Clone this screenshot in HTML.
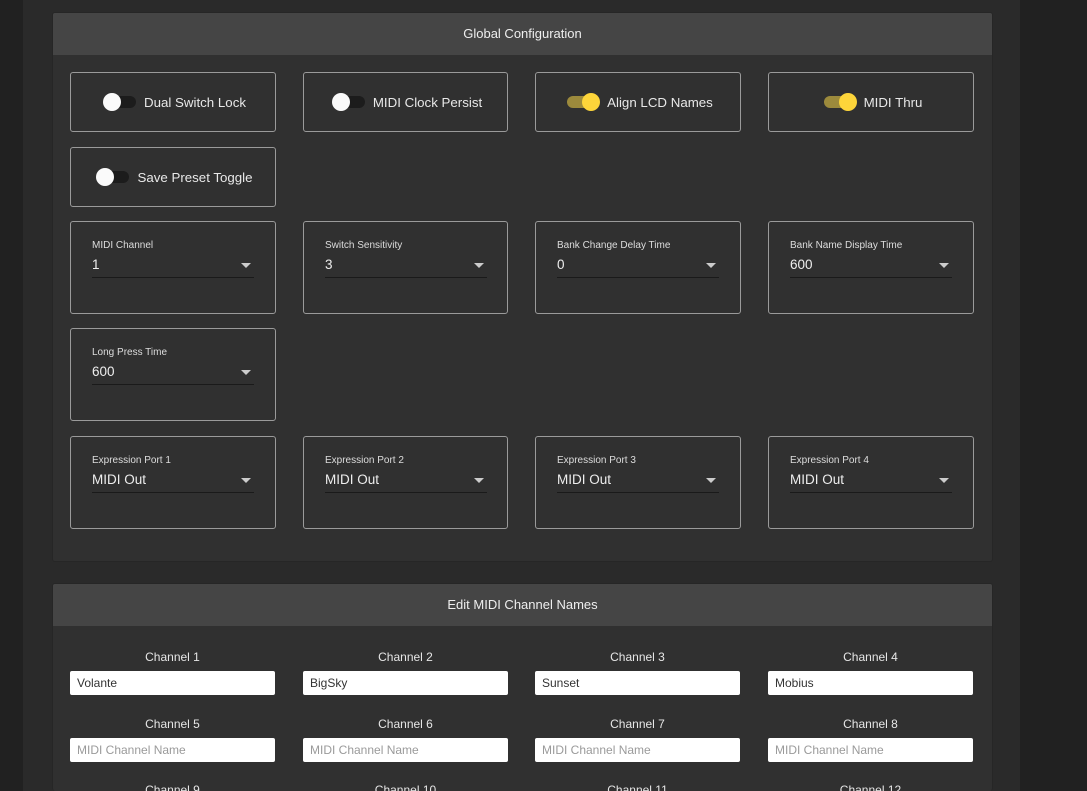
<!DOCTYPE html>
<html style="width:1087px;height:791px;overflow:hidden"><head><style>
*{box-sizing:border-box;margin:0;padding:0}
body{width:1087px;height:791px;overflow:hidden;background:#212121;font-family:"Liberation Sans",Roboto,sans-serif;position:relative}
.main{position:absolute;left:23px;top:0;width:997px;height:791px;background:#2a2a2a}
.panel{position:absolute;left:52px;width:941px;background:#303030;border:1px solid #262626;border-radius:3px;overflow:hidden}
.hdr{height:42px;background:#454545;color:#eee;font-size:13px;text-align:center;line-height:42px}
.card{position:absolute;border:1px solid #9a9a9a;border-radius:3px;color:#e8e8e8}
.tg{display:flex;align-items:center;justify-content:center;font-size:13.3px;padding-left:4px}
.sw{position:relative;width:32px;height:12px;border-radius:6px;background:#1c1c1c;margin-right:8px}
.sw i{position:absolute;top:-3px;left:-1px;width:18px;height:18px;border-radius:50%;background:#fafafa}
.sw.on{background:#9c8a3c}.sw.on i{left:15px;background:#fdd53a}
.lbl{position:absolute;left:21px;top:18px;font-size:10px;color:#ddd}
.val{position:absolute;left:21px;top:35px;font-size:13.5px;color:#eee}
.ul{position:absolute;left:21px;top:55px;width:162px;height:1px;background:#1a1a1a}
.ar{position:absolute;left:170px;top:41px;border-left:5px solid transparent;border-right:5px solid transparent;border-top:5px solid #ccc}
.cl{position:absolute;width:205px;text-align:center;font-size:12px;color:#e6e6e6}
.in{position:absolute;width:205px;height:24px;background:#fff;border-radius:2px;font-size:12px;line-height:24px;padding-left:7px;color:#333}
.in.ph{color:#9a9a9a}
</style></head><body>
<div class="main"></div>
<div class="panel" style="top:12px;height:550px"><div class="hdr">Global Configuration</div></div>
<div class="card tg" style="left:70px;top:72px;width:206px;height:60px"><span class="sw"><i></i></span>Dual Switch Lock</div>
<div class="card tg" style="left:303px;top:72px;width:205px;height:60px"><span class="sw"><i></i></span>MIDI Clock Persist</div>
<div class="card tg" style="left:535px;top:72px;width:206px;height:60px"><span class="sw on"><i></i></span>Align LCD Names</div>
<div class="card tg" style="left:768px;top:72px;width:206px;height:60px"><span class="sw on"><i></i></span>MIDI Thru</div>
<div class="card tg" style="left:70px;top:147px;width:206px;height:60px"><span class="sw"><i></i></span>Save Preset Toggle</div>

<div class="card" style="left:70px;top:221px;width:206px;height:93px"><div class="lbl">MIDI Channel</div><div class="val">1</div><div class="ar"></div><div class="ul"></div></div>
<div class="card" style="left:303px;top:221px;width:205px;height:93px"><div class="lbl">Switch Sensitivity</div><div class="val">3</div><div class="ar"></div><div class="ul"></div></div>
<div class="card" style="left:535px;top:221px;width:206px;height:93px"><div class="lbl">Bank Change Delay Time</div><div class="val">0</div><div class="ar"></div><div class="ul"></div></div>
<div class="card" style="left:768px;top:221px;width:206px;height:93px"><div class="lbl">Bank Name Display Time</div><div class="val">600</div><div class="ar"></div><div class="ul"></div></div>
<div class="card" style="left:70px;top:328px;width:206px;height:93px"><div class="lbl">Long Press Time</div><div class="val">600</div><div class="ar"></div><div class="ul"></div></div>
<div class="card" style="left:70px;top:436px;width:206px;height:93px"><div class="lbl">Expression Port 1</div><div class="val">MIDI Out</div><div class="ar"></div><div class="ul"></div></div>
<div class="card" style="left:303px;top:436px;width:205px;height:93px"><div class="lbl">Expression Port 2</div><div class="val">MIDI Out</div><div class="ar"></div><div class="ul"></div></div>
<div class="card" style="left:535px;top:436px;width:206px;height:93px"><div class="lbl">Expression Port 3</div><div class="val">MIDI Out</div><div class="ar"></div><div class="ul"></div></div>
<div class="card" style="left:768px;top:436px;width:206px;height:93px"><div class="lbl">Expression Port 4</div><div class="val">MIDI Out</div><div class="ar"></div><div class="ul"></div></div>

<div class="panel" style="top:583px;height:208px;border-bottom:none"><div class="hdr">Edit MIDI Channel Names</div></div>
<div class="cl" style="left:70px;top:650px">Channel 1</div><div class="in" style="left:70px;top:671px">Volante</div>
<div class="cl" style="left:303px;top:650px">Channel 2</div><div class="in" style="left:303px;top:671px">BigSky</div>
<div class="cl" style="left:535px;top:650px">Channel 3</div><div class="in" style="left:535px;top:671px">Sunset</div>
<div class="cl" style="left:768px;top:650px">Channel 4</div><div class="in" style="left:768px;top:671px">Mobius</div>
<div class="cl" style="left:70px;top:717px">Channel 5</div><div class="in ph" style="left:70px;top:738px">MIDI Channel Name</div>
<div class="cl" style="left:303px;top:717px">Channel 6</div><div class="in ph" style="left:303px;top:738px">MIDI Channel Name</div>
<div class="cl" style="left:535px;top:717px">Channel 7</div><div class="in ph" style="left:535px;top:738px">MIDI Channel Name</div>
<div class="cl" style="left:768px;top:717px">Channel 8</div><div class="in ph" style="left:768px;top:738px">MIDI Channel Name</div>
<div class="cl" style="left:70px;top:783px">Channel 9</div>
<div class="cl" style="left:303px;top:783px">Channel 10</div>
<div class="cl" style="left:535px;top:783px">Channel 11</div>
<div class="cl" style="left:768px;top:783px">Channel 12</div>
</body></html>
